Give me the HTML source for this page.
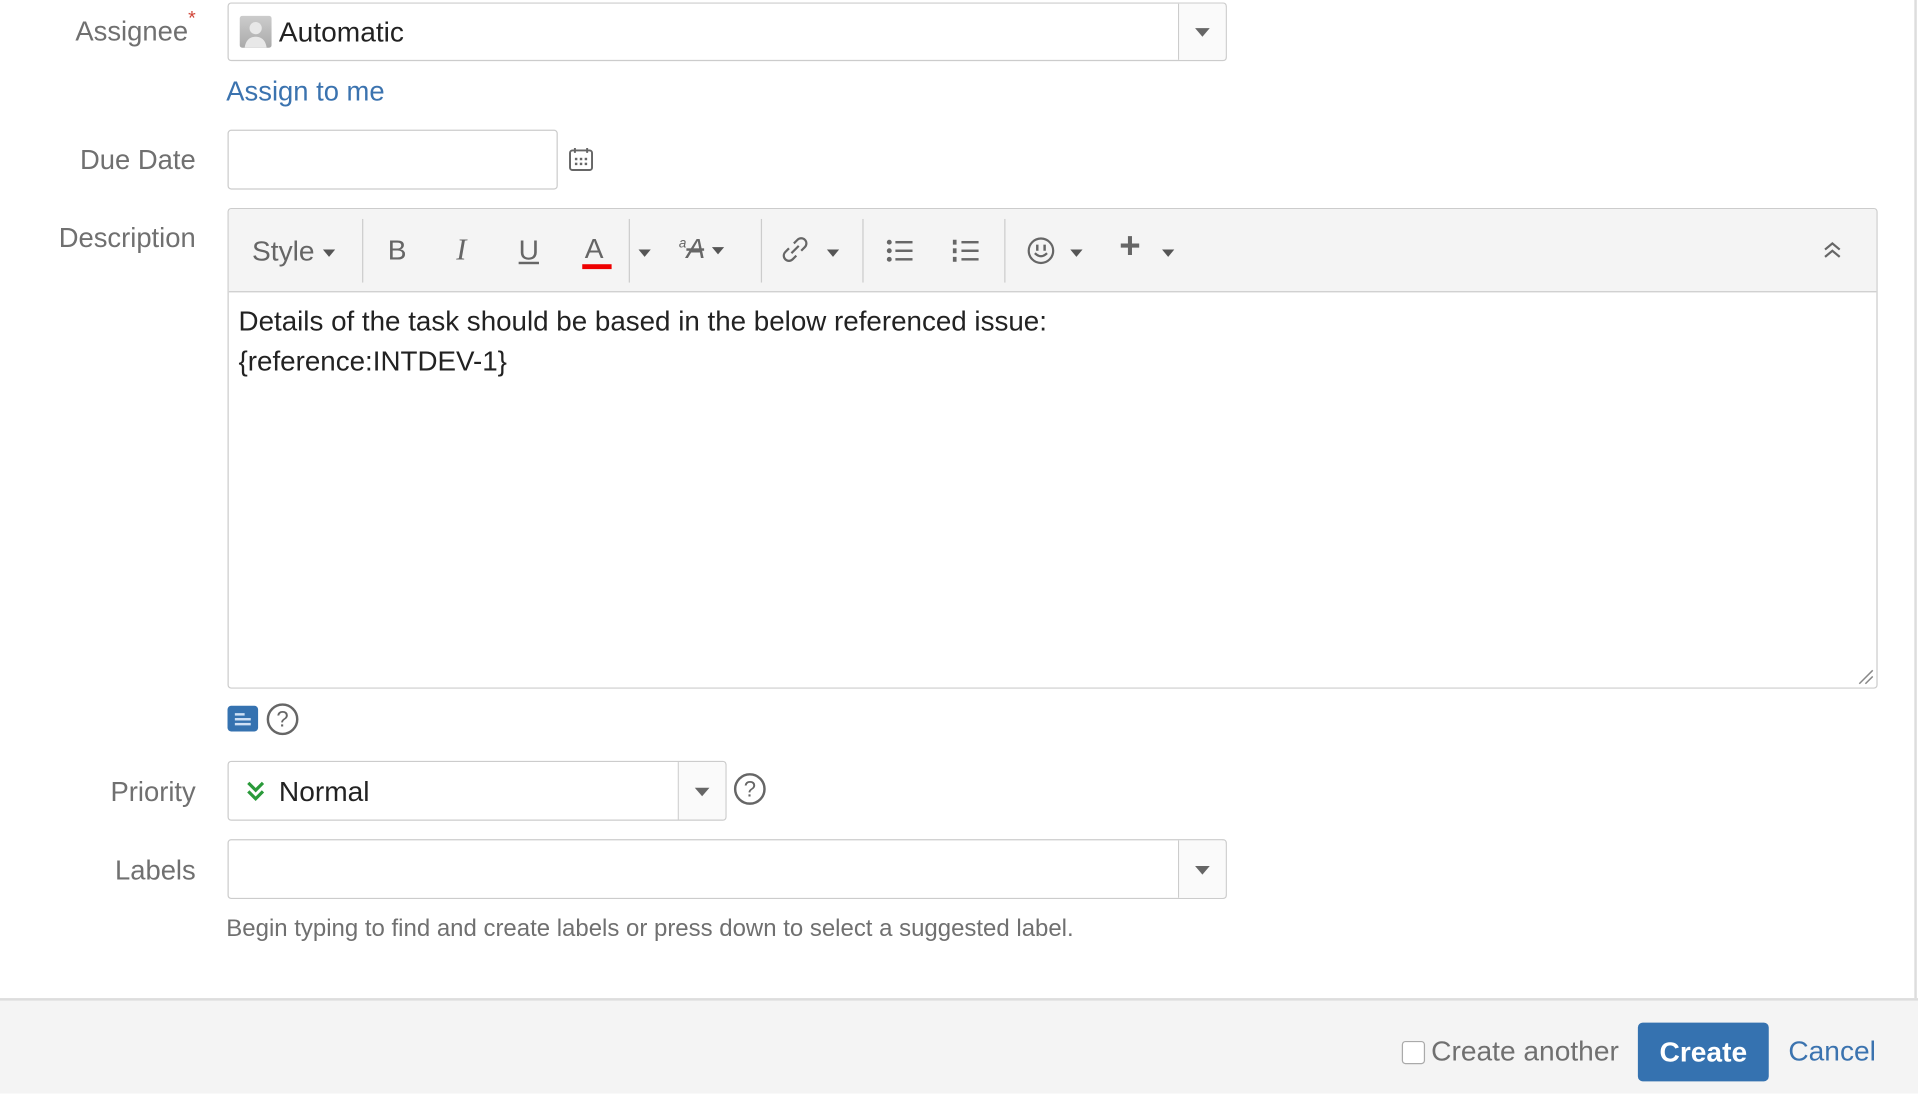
<!DOCTYPE html>
<html><head><meta charset="utf-8"><style>
html,body{margin:0;padding:0;width:1918px;height:1091px;overflow:hidden;background:#fff}
#w{position:absolute;left:0;top:0;width:1568px;height:892px;transform:scale(1.22321);transform-origin:0 0;font-family:"Liberation Sans",Arial,sans-serif;color:#333}
.a{position:absolute}
.lbl{position:absolute;right:1408px;font-size:22.4px;color:#707070;white-space:nowrap}
.box{position:absolute;border:1px solid #ccc;border-radius:3px;background:#fff;box-sizing:border-box}
.dd{position:absolute;top:0;bottom:0;right:0;width:38px;border-left:1px solid #ccc;background:#fafafa;border-radius:0 3px 3px 0}
.dd:after{content:"";position:absolute;left:13px;top:50%;margin-top:-3px;border-left:6px solid transparent;border-right:6px solid transparent;border-top:7px solid #666}
.tri{display:inline-block;border-left:5px solid transparent;border-right:5px solid transparent;border-top:6px solid #555;vertical-align:middle}
.sep{position:absolute;top:8px;height:52px;width:1px;background:#ccc}
.tb{position:absolute;font-size:23px;color:#666}
.help{position:absolute;width:22px;height:22px;border:2px solid #666;border-radius:50%;font-size:18px;text-align:center;line-height:22px;color:#666}
</style></head><body><div id="w">
<div class="a" style="left:1565px;top:0;width:2px;height:817px;background:#ddd"></div>

<div class="lbl" style="top:13px">Assignee<span style="color:#d04437;font-size:16px;vertical-align:top;position:relative;top:-6px">*</span></div>
<div class="box" style="left:186px;top:2px;width:817px;height:48px">
 <div class="a" style="left:9px;top:10px;width:26px;height:26px;background:linear-gradient(#ccc,#aaa);border-radius:2px"><svg width="26" height="26"><circle cx="13" cy="10" r="5" fill="#e8e8e8"/><path d="M4 26c1-7 5-9 9-9s8 2 9 9z" fill="#e8e8e8"/></svg></div>
 <div class="a" style="left:41px;top:10px;font-size:23px;color:#222">Automatic</div>
 <div class="dd"></div>
</div>
<div class="a" style="left:185px;top:62px;font-size:22.4px;color:#3b73af">Assign to me</div>

<div class="lbl" style="top:118px">Due Date</div>
<div class="box" style="left:186px;top:106px;width:270px;height:49px"></div>
<svg class="a" style="left:464px;top:119px" width="22" height="22"><rect x="2" y="4" width="18" height="16" rx="2" fill="none" stroke="#666" stroke-width="1.6"/><line x1="6" y1="2" x2="6" y2="6" stroke="#666" stroke-width="1.6"/><line x1="16" y1="2" x2="16" y2="6" stroke="#666" stroke-width="1.6"/><g fill="#666"><rect x="6" y="10" width="2" height="2"/><rect x="10" y="10" width="2" height="2"/><rect x="14" y="10" width="2" height="2"/><rect x="6" y="14" width="2" height="2"/><rect x="10" y="14" width="2" height="2"/><rect x="14" y="14" width="2" height="2"/></g></svg>

<div class="lbl" style="top:182px">Description</div>
<div class="box" style="left:186px;top:170px;width:1349px;height:393px;border-radius:3px;overflow:hidden">
 <div class="a" style="left:0;top:0;right:0;height:67px;background:#f4f4f4;border-bottom:1px solid #ccc">
  <div class="tb" style="left:19px;top:21px">Style <span class="tri"></span></div>
  <div class="sep" style="left:109px"></div>
  <div class="tb" style="left:130px;top:20px">B</div>
  <div class="tb" style="left:186px;top:20px;font-family:'Liberation Serif',serif;font-style:italic;font-size:25px">I</div>
  <div class="tb" style="left:237px;top:20px;text-decoration:underline">U</div>
  <div class="tb" style="left:291px;top:19px">A</div>
  <div class="a" style="left:289px;top:45px;width:24px;height:4px;background:#e00"></div>
  <div class="sep" style="left:327px"></div>
  <div class="tb" style="left:335px;top:21px"><span class="tri"></span></div>
  <div class="tb" style="left:368px;top:19px;font-style:italic"><sup style="font-size:11px">a</sup><s>A</s> <span class="tri"></span></div>
  <div class="sep" style="left:435px"></div>
  <svg class="a" style="left:450px;top:20px" width="26" height="28"><path d="M10 16l6-6M8 12l-3 3a4 4 0 006 6l3-3M18 14l3-3a4 4 0 00-6-6l-3 3" fill="none" stroke="#666" stroke-width="1.8"/></svg>
  <div class="tb" style="left:489px;top:21px"><span class="tri"></span></div>
  <div class="sep" style="left:518px"></div>
  <svg class="a" style="left:537px;top:24px" width="24" height="20"><g fill="#666"><circle cx="3" cy="3" r="2"/><circle cx="3" cy="10" r="2"/><circle cx="3" cy="17" r="2"/><rect x="8" y="2" width="14" height="2"/><rect x="8" y="9" width="14" height="2"/><rect x="8" y="16" width="14" height="2"/></g></svg>
  <svg class="a" style="left:591px;top:24px" width="24" height="20"><g fill="#666"><rect x="1" y="1" width="3" height="4"/><rect x="1" y="8" width="3" height="4"/><rect x="1" y="15" width="3" height="4"/><rect x="8" y="2" width="14" height="2"/><rect x="8" y="9" width="14" height="2"/><rect x="8" y="16" width="14" height="2"/></g></svg>
  <div class="sep" style="left:634px"></div>
  <svg class="a" style="left:652px;top:22px" width="24" height="24"><circle cx="12" cy="12" r="10" fill="none" stroke="#666" stroke-width="1.8"/><rect x="8" y="7" width="2" height="5" fill="#666"/><rect x="14" y="7" width="2" height="5" fill="#666"/><path d="M7 14q5 5 10 0" fill="none" stroke="#666" stroke-width="1.8"/></svg>
  <div class="tb" style="left:688px;top:21px"><span class="tri"></span></div>
  <div class="tb" style="left:728px;top:14px;font-size:30px;font-weight:bold">+</div>
  <div class="tb" style="left:763px;top:21px"><span class="tri"></span></div>
  <svg class="a" style="left:1302px;top:25px" width="18" height="16"><path d="M3 8l6-5 6 5M3 14l6-5 6 5" fill="none" stroke="#666" stroke-width="1.8"/></svg>
 </div>
 <div class="a" style="left:8px;top:75px;font-size:22.7px;line-height:33px;color:#222;white-space:nowrap">Details of the task should be based in the below referenced issue:<br>{reference:INTDEV-1}</div>
 <svg class="a" style="right:2px;bottom:2px" width="14" height="14"><path d="M2 13L13 2M7 13l6-6" stroke="#888" stroke-width="1.2"/></svg>
</div>
<div class="a" style="left:186px;top:577px;width:25px;height:21px;background:#3572b0;border-radius:3px"><svg width="25" height="21"><g fill="#cfe0f5"><rect x="6" y="6" width="8" height="2"/><rect x="6" y="10" width="13" height="2"/><rect x="6" y="14" width="13" height="2"/></g></svg></div>
<div class="help" style="left:218px;top:575px">?</div>

<div class="lbl" style="top:635px">Priority</div>
<div class="box" style="left:186px;top:622px;width:408px;height:49px">
 <svg class="a" style="left:13px;top:14px" width="18" height="20"><path d="M3 3l6 6 6-6M3 10l6 6 6-6" fill="none" stroke="#2a9a3a" stroke-width="2.6"/></svg>
 <div class="a" style="left:41px;top:11px;font-size:23px;color:#222">Normal</div>
 <div class="dd"></div>
</div>
<div class="help" style="left:600px;top:632px">?</div>

<div class="lbl" style="top:699px">Labels</div>
<div class="box" style="left:186px;top:686px;width:817px;height:49px"><div class="dd"></div></div>
<div class="a" style="left:185px;top:748px;font-size:19.6px;color:#707070;white-space:nowrap">Begin typing to find and create labels or press down to select a suggested label.</div>

<div class="a" style="left:0;top:816px;width:1568px;height:76px;background:#f4f4f4;border-top:2px solid #ddd"></div>
<div class="a" style="left:1146px;top:851px;width:17px;height:17px;border:1px solid #aaa;border-radius:3px;background:#fff"></div>
<div class="a" style="left:1170px;top:846px;font-size:23px;color:#707070">Create another</div>
<div class="a" style="left:1339px;top:836px;width:107px;height:48px;background:#3572b0;border-radius:4px;color:#fff;font-weight:bold;font-size:23px;text-align:center;line-height:48px">Create</div>
<div class="a" style="left:1462px;top:846px;font-size:23px;color:#3b73af">Cancel</div>
</div></body></html>
